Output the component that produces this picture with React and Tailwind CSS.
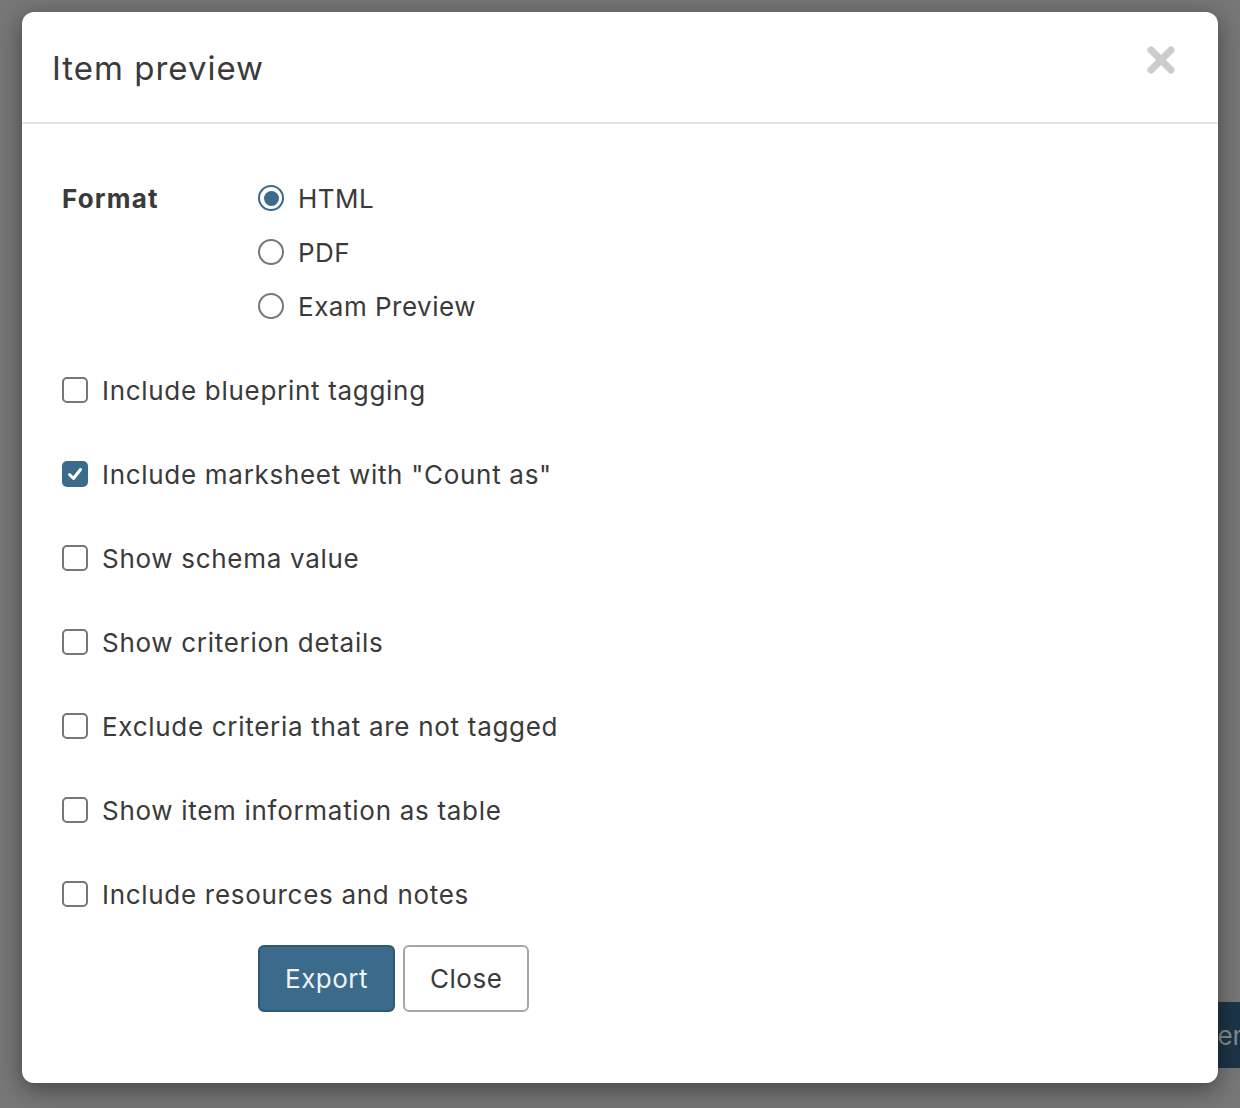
import React, { useState } from 'react';

const CloseIcon = () => (
  <svg width="30" height="30" viewBox="0 0 30 30" fill="none">
    <path d="M5 5 L25 25 M25 5 L5 25" stroke="#cccccc" strokeWidth="7" strokeLinecap="round" />
  </svg>
);

const Radio = ({ checked, label, onChange }) => (
  <label className="flex items-center gap-[14px] h-[54px] cursor-pointer" onClick={onChange}>
    <span className={`flex items-center justify-center w-[26px] h-[26px] rounded-full border-2 ${checked ? 'border-[#3b6a8a]' : 'border-[#767676]'}`}>
      {checked && <span className="w-[15px] h-[15px] rounded-full bg-[#3b6a8a]"></span>}
    </span>
    <span className="text-[26px] tracking-[0.5px] text-[#3a3a3a]">{label}</span>
  </label>
);

const Checkbox = ({ checked, label, onChange }) => (
  <label className="flex items-center gap-[14px] h-[84px] cursor-pointer" onClick={onChange}>
    <span className={`flex items-center justify-center w-[26px] h-[26px] rounded-[5px] ${checked ? 'bg-[#3b6a8a]' : 'border-2 border-[#767676] bg-white'}`}>
      {checked && (
        <svg width="18" height="18" viewBox="0 0 18 18" fill="none">
          <path d="M3.5 9.5 L7.5 13.5 L14.5 4.5" stroke="white" strokeWidth="3" strokeLinecap="round" strokeLinejoin="round" />
        </svg>
      )}
    </span>
    <span className="text-[26px] tracking-[0.7px] text-[#3a3a3a]">{label}</span>
  </label>
);

export default function App() {
  const [format, setFormat] = useState('HTML');
  const [opts, setOpts] = useState({
    blueprint: false,
    marksheet: true,
    schema: false,
    criterion: false,
    exclude: false,
    table: false,
    resources: false,
  });

  const toggle = (key) => setOpts(prev => ({ ...prev, [key]: !prev[key] }));

  const checks = [
    ['blueprint', 'Include blueprint tagging'],
    ['marksheet', 'Include marksheet with "Count as"'],
    ['schema', 'Show schema value'],
    ['criterion', 'Show criterion details'],
    ['exclude', 'Exclude criteria that are not tagged'],
    ['table', 'Show item information as table'],
    ['resources', 'Include resources and notes'],
  ];

  return (
    <div className="relative w-[1240px] h-[1108px] overflow-hidden bg-[#777777] font-['Inter',sans-serif]">
      {/* page button peeking out behind the backdrop */}
      <div className="absolute left-[1170px] top-[1002px] w-[110px] h-[66px] bg-[#1c3547] rounded-[6px] flex items-center pl-[28px] text-[26px] text-[#8a8a8a] whitespace-nowrap">
        Gen
      </div>

      <div className="relative ml-[22px] mt-[12px] w-[1196px] h-[1071px] bg-white rounded-[12px] shadow-[0_6px_24px_rgba(0,0,0,0.45)]">
        {/* Header */}
        <div className="flex items-center justify-between h-[112px] pl-[30px] pr-[42px] border-b-2 border-[#e5e5e5]">
          <h2 className="mt-[4px] text-[33px] text-[#3a3a3a] font-normal tracking-[1px]">Item preview</h2>
          <button className="mb-[14px]"><CloseIcon /></button>
        </div>

        {/* Body */}
        <div className="pl-[40px] pt-[47px]">
          <div className="flex">
            <div className="w-[196px] pt-[8px] text-[26px] font-bold tracking-[1.2px] text-[#3a3a3a]">Format</div>
            <div className="flex flex-col">
              {['HTML', 'PDF', 'Exam Preview'].map(f => (
                <Radio key={f} label={f} checked={format === f} onChange={() => setFormat(f)} />
              ))}
            </div>
          </div>

          <div className="flex flex-col mt-[15px]">
            {checks.map(([key, label]) => (
              <Checkbox key={key} label={label} checked={opts[key]} onChange={() => toggle(key)} />
            ))}
          </div>

          <div className="flex gap-[8px] ml-[196px] mt-[9px]">
            <button className="h-[67px] px-[25px] rounded-[6px] bg-[#3b6a8a] border-2 border-[#2f5772] text-[26px] tracking-[0.5px] text-[#eef3f7]">Export</button>
            <button className="h-[67px] px-[25px] rounded-[6px] bg-white border-2 border-[#a6a6a6] text-[26px] tracking-[0.5px] text-[#3a3a3a]">Close</button>
          </div>
        </div>
      </div>
    </div>
  );
}
